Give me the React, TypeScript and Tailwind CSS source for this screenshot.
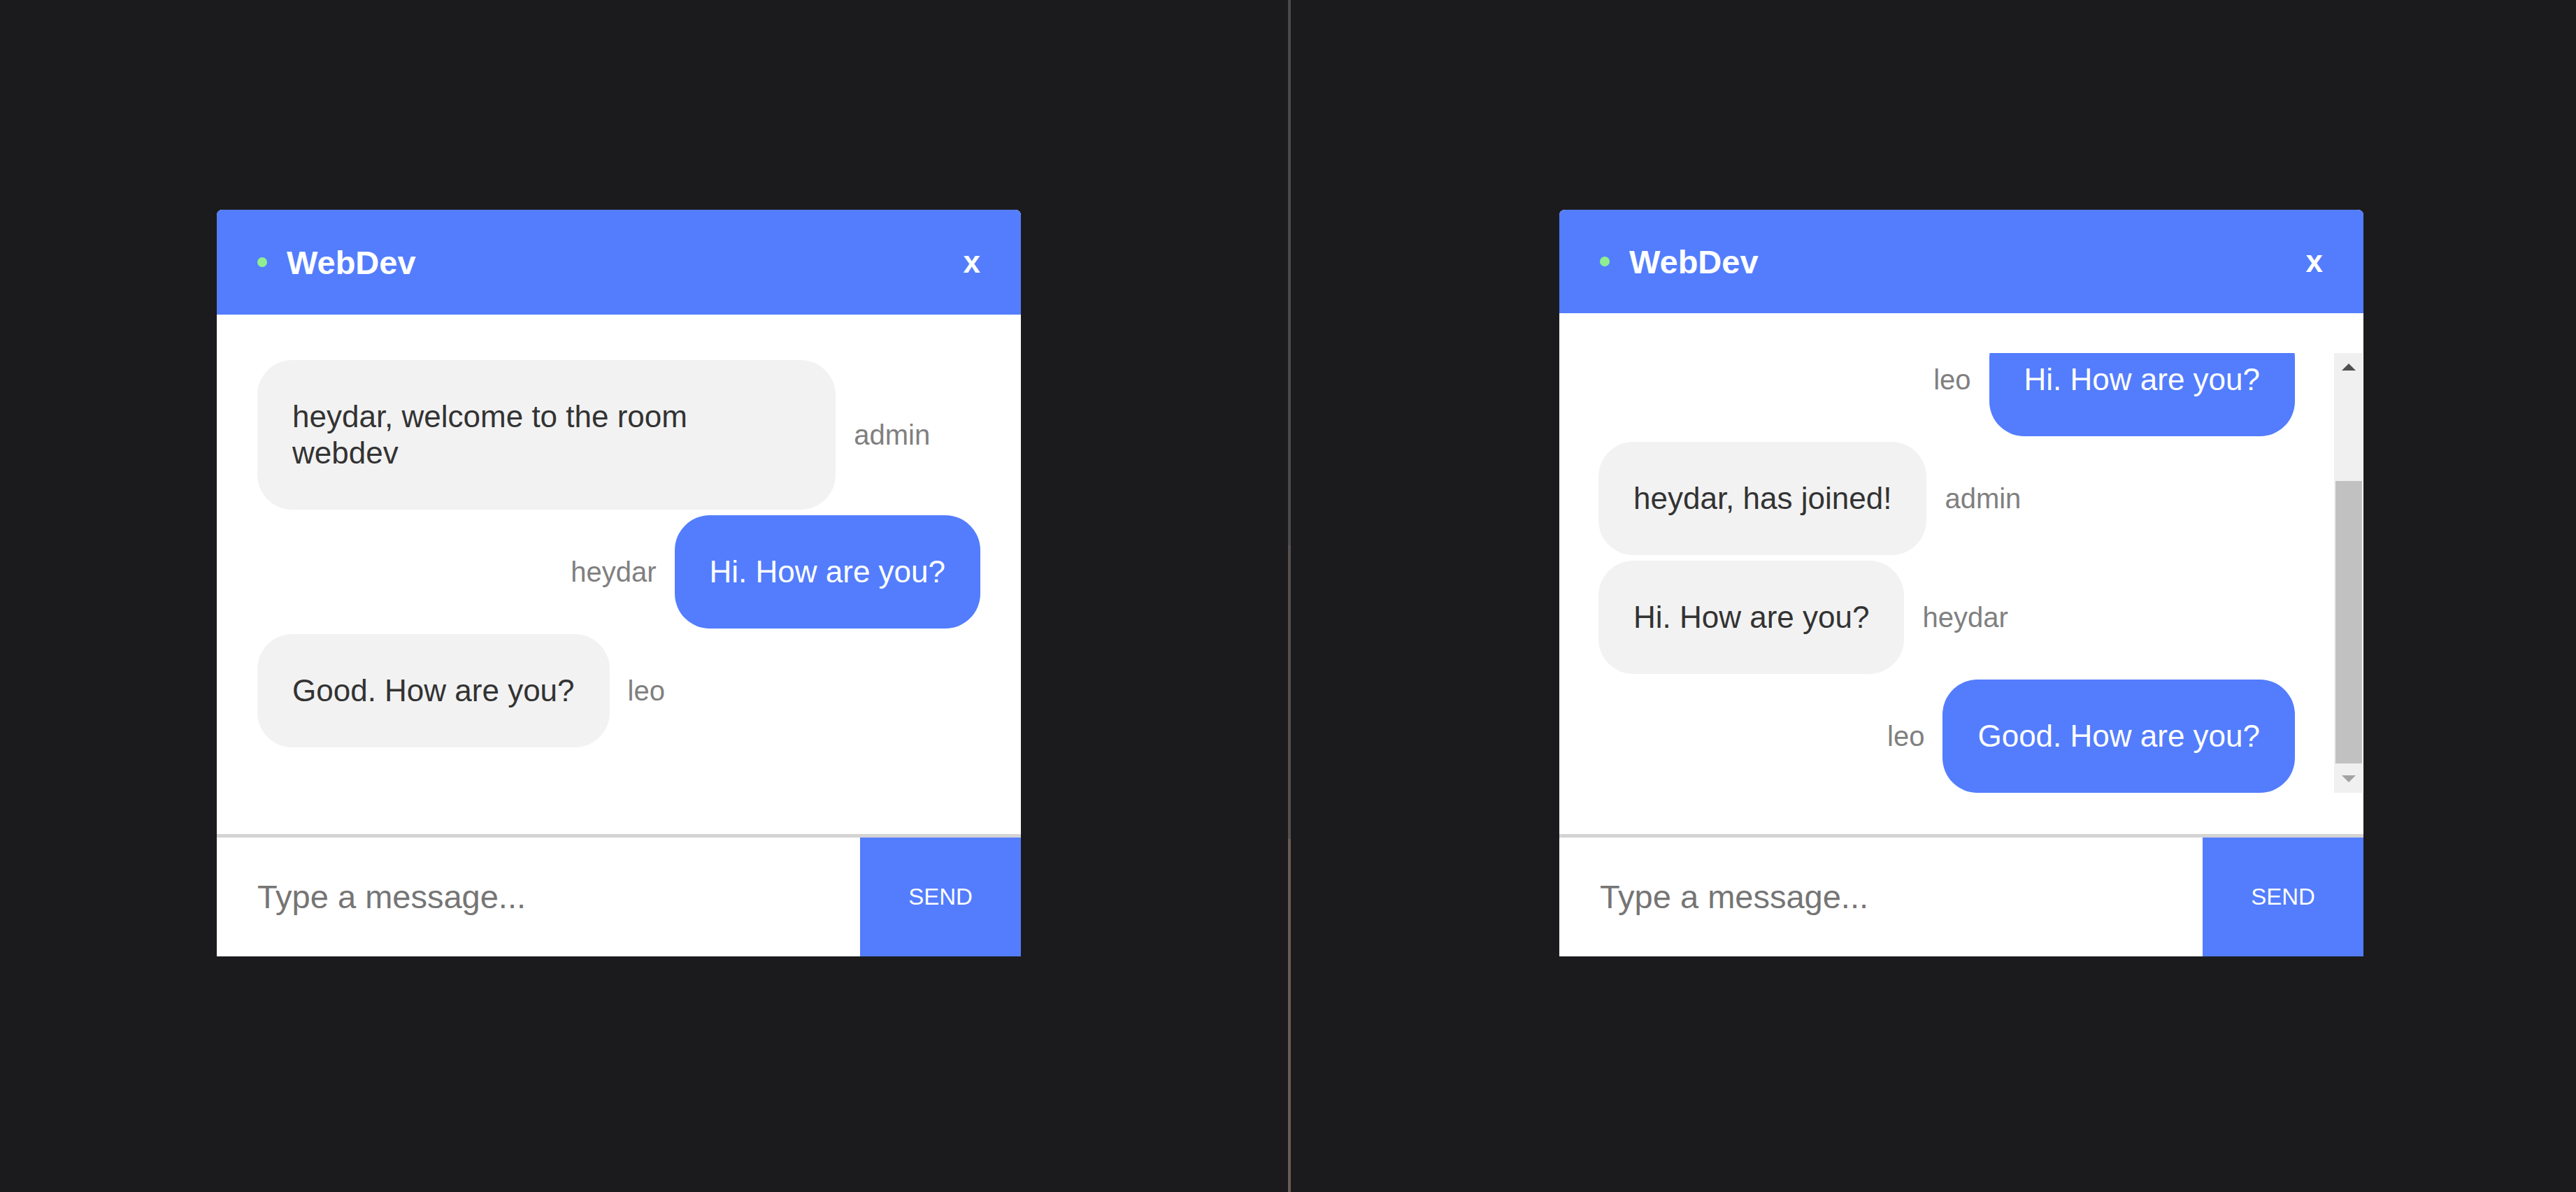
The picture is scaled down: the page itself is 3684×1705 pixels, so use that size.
import { useState } from 'react';

interface Message {
  user: string;
  text: string;
}

const leftMessages: Message[] = [
  { user: 'admin', text: 'heydar, welcome to the room webdev' },
  { user: 'heydar', text: 'Hi. How are you?' },
  { user: 'leo', text: 'Good. How are you?' },
];

const rightMessages: Message[] = [
  { user: 'admin', text: 'leo, welcome to the room webdev' },
  { user: 'leo', text: 'Hi. How are you?' },
  { user: 'admin', text: 'heydar, has joined!' },
  { user: 'heydar', text: 'Hi. How are you?' },
  { user: 'leo', text: 'Good. How are you?' },
];

function MessageRow({ message, own }: { message: Message; own: boolean }) {
  return (
    <div className={`mt-[8px] flex items-center gap-[26px] ${own ? 'flex-row-reverse' : ''}`}>
      <div
        className={`max-w-[80%] rounded-[50px] px-[50px] py-[55px] text-[44px] leading-[52px] ${
          own ? 'bg-[#537dfd] text-white' : 'bg-[#f2f2f2] text-[#333333]'
        }`}
      >
        {message.text}
      </div>
      <span className="text-[40px] leading-[52px] text-[#808080]">{message.user}</span>
    </div>
  );
}

function Scrollbar() {
  return (
    <div className="mr-[1px] flex w-[41px] flex-col bg-[#f0f0f0]">
      {/* up arrow */}
      <div className="flex h-[40px] items-center justify-center">
        <div className="h-0 w-0 border-x-[10px] border-b-[10px] border-x-transparent border-b-[#505050]" />
      </div>
      {/* track */}
      <div className="flex flex-1 flex-col justify-end pb-[2px]">
        <div className="ml-[2px] mr-[1px] h-[404px] bg-[#c1c1c1]" />
      </div>
      {/* down arrow */}
      <div className="flex h-[40px] items-center justify-center">
        <div className="h-0 w-0 border-x-[10px] border-t-[10px] border-x-transparent border-t-[#a3a3a3]" />
      </div>
    </div>
  );
}

function ChatBox({
  me,
  messages,
  scrolled,
  headerClass,
}: {
  me: string;
  messages: Message[];
  scrolled: boolean;
  headerClass: string;
}) {
  const [draft, setDraft] = useState('');

  return (
    <div className="flex h-[1068px] w-[1150px] flex-col overflow-hidden rounded-t-[8px] bg-white">
      {/* Header */}
      <div className={`flex shrink-0 items-center justify-between bg-[#537dfd] pl-[58px] pr-[58px] ${headerClass}`}>
        <div className="flex items-center gap-[28px]">
          <span className="h-[14px] w-[14px] rounded-full bg-[#90ee90]" />
          <span className="text-[47px] font-bold leading-none text-white">WebDev</span>
        </div>
        <button className="text-[44px] font-bold leading-none text-white">x</button>
      </div>

      {/* Messages */}
      <div className="flex min-h-0 flex-1 flex-col pb-[59px] pt-[57px]">
        <div className="flex min-h-0 flex-1">
          <div
            className={`flex min-w-0 flex-1 flex-col overflow-hidden ${
              scrolled ? 'justify-end px-[56px]' : 'justify-start px-[58px]'
            }`}
          >
            {messages.map((m, i) => (
              <MessageRow key={i} message={m} own={m.user === me} />
            ))}
          </div>
          {scrolled && <Scrollbar />}
        </div>
      </div>

      {/* Input */}
      <div className="h-[5px] shrink-0 bg-[#d3d3d3]" />
      <div className="flex h-[170px] shrink-0">
        <input
          value={draft}
          onChange={(e) => setDraft(e.target.value)}
          placeholder="Type a message..."
          className="min-w-0 flex-1 bg-white pl-[58px] text-[47px] text-[#333333] outline-none placeholder:text-[#757575]"
        />
        <button className="w-[230px] bg-[#537dfd] text-[33px] text-white">SEND</button>
      </div>
    </div>
  );
}

export default function App() {
  return (
    <div className="flex h-[1705px] w-full bg-[#1b1b1d] font-['Liberation_Sans',Arial,sans-serif]">
      <div className="w-[1842px] shrink-0 pl-[310px] pt-[300px]">
        <ChatBox me="heydar" messages={leftMessages} scrolled={false} headerClass="h-[150px]" />
      </div>

      {/* window edge */}
      <div className="flex w-[4px] shrink-0 flex-col">
        <div className="h-[780px] bg-[#4a4a4d]" />
        <div className="h-[420px] bg-[#55504d]" />
        <div className="flex-1 bg-[#6a5d55]" />
      </div>

      <div className="flex-1 pl-[384px] pt-[300px]">
        <ChatBox me="leo" messages={rightMessages} scrolled={true} headerClass="h-[148px]" />
      </div>
    </div>
  );
}
